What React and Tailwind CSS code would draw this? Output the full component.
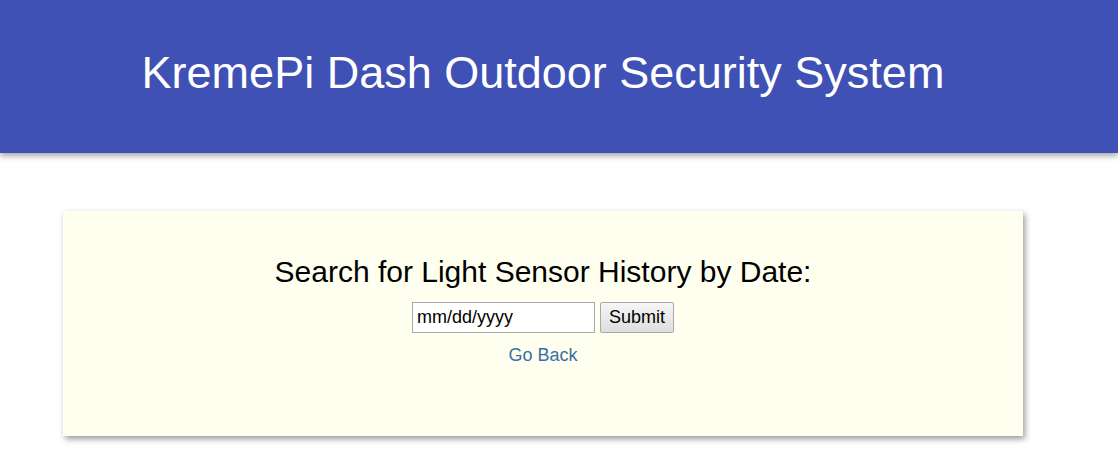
export default function App() {
  return (
    <div className="min-h-[450px] bg-white" style={{ fontFamily: '"Liberation Sans", Arial, sans-serif' }}>
      <header className="h-[153px] bg-[#3f51b5] shadow-[0_3px_6px_rgba(0,0,0,0.35)] relative z-10">
        <div className="ml-[63px] w-[960px] pt-[47px] text-center">
          <h1 className="text-[45px] leading-[52px] text-white">KremePi Dash Outdoor Security System</h1>
        </div>
      </header>
      <main className="pt-[58px]">
        <div className="ml-[63px] w-[960px] h-[225px] bg-[#fffff0] shadow-[2px_3px_6px_rgba(0,0,0,0.4)] flex flex-col items-center pt-[43px]">
          <h2 className="text-[30px] leading-[36px] text-black">Search for Light Sensor History by Date:</h2>
          <form className="mt-[12px] flex items-center gap-[5px]" onSubmit={(e) => e.preventDefault()}>
            <input
              type="text"
              placeholder="mm/dd/yyyy"
              className="w-[183px] h-[31px] border border-[#a9a9a9] bg-white px-[4px] text-[18px] text-black placeholder:text-black outline-none"
            />
            <button className="h-[31px] w-[74px] border border-[#a9a9a9] rounded-[2px] bg-gradient-to-b from-[#f6f6f6] to-[#dedede] text-[18px] text-black">Submit</button>
          </form>
          <a href="#" className="mt-[11px] text-[18px] leading-[22px] text-[#3b6ea5]">Go Back</a>
        </div>
      </main>
    </div>
  );
}
